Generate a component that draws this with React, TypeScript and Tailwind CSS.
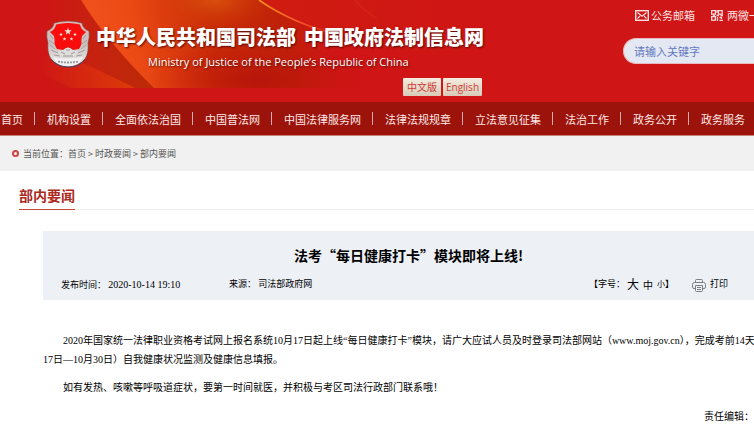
import React from 'react';

const navItems = [
  '首页',
  '机构设置',
  '全面依法治国',
  '中国普法网',
  '中国法律服务网',
  '法律法规规章',
  '立法意见征集',
  '法治工作',
  '政务公开',
  '政务服务',
];

const crumbs = ['首页', '时政要闻', '部内要闻'];

const sans = "font-['Noto_Sans_CJK_SC',sans-serif]";
const song = "font-['Liberation_Serif','Noto_Sans_CJK_SC',serif]";

const star = (cx: number, cy: number, r: number) =>
  Array.from({ length: 10 }, (_, i) => {
    const a = (Math.PI / 5) * i - Math.PI / 2;
    const d = i % 2 ? r * 0.4 : r;
    return `${(cx + d * Math.cos(a)).toFixed(2)},${(cy + d * Math.sin(a)).toFixed(2)}`;
  }).join(' ');

const Emblem: React.FC = () => (
  <svg viewBox="0 0 44 48" className="w-11 h-12 shrink-0" aria-label="司法部徽章">
    <defs>
      <linearGradient id="silver" x1="0" y1="0" x2="0" y2="1">
        <stop offset="0" stopColor="#d9b9b4" />
        <stop offset="0.5" stopColor="#c9c2c2" />
        <stop offset="1" stopColor="#ececec" />
      </linearGradient>
    </defs>
    <path
      d="M8 3Q22 -1 36 3Q37 9 43 11Q44 17 42 23Q43 33 39 39Q33 46 22 47Q11 46 5 39Q1 33 2 23Q0 17 1 11Q7 9 8 3Z"
      fill="url(#silver)"
      stroke="#7a3b3b"
      strokeWidth="0.6"
    />
    <path
      d="M10 4.500Q22 1.500 34 4.500Q35 10 40 12L36 16Q35 20 35.500 24Q34 28 33 29L27 30Q22 25 17 30L11 29Q10 28 8.500 24Q9 20 8 16L4 12Q9 10 10 4.500Z"
      fill="#f80c0c"
    />
    <g fill="#fde3d8">
      <polygon points={star(22, 11.5, 4)} />
      <polygon points={star(15, 14.5, 2)} />
      <polygon points={star(29, 14.5, 2)} />
      <polygon points={star(18.5, 19, 2)} />
      <polygon points={star(25.5, 19, 2)} />
    </g>
    <path
      d="M4 15L7 19M3 20L8 24M4 25L9 29M5 30L12 33M8 35L14 36M40 15L37 19M41 20L36 24M40 25L35 29M39 30L32 33M36 35L30 36"
      stroke="#a3938f"
      strokeWidth="0.9"
      fill="none"
    />
    <path d="M12 31L18 30Q22 25 26 30L32 31L30 36H14Z" fill="#dedede" />
    <path d="M15 32L19 34M29 32L25 34M20 30H24M17 36H27" stroke="#99908f" strokeWidth="0.9" />
    <path d="M7 37Q14 39 22 38.500T37 37Q34 45.500 22 46T7 37Z" fill="#f1f1f1" />
    <path d="M12 41.500Q22 43.500 32 41.500" stroke="#9a9aa0" strokeWidth="1.8" strokeDasharray="2 1" fill="none" />
    <path d="M5 39Q10 46.500 22 47T39 39" stroke="#3a4472" strokeWidth="0.9" fill="none" />
  </svg>
);

const BannerArt: React.FC = () => (
  <svg
    viewBox="0 0 440 88"
    preserveAspectRatio="none"
    className="absolute left-[43px] top-0 w-[440px] h-[88px]"
    aria-hidden="true"
  >
    <defs>
      <linearGradient id="leftFade" x1="0" y1="0" x2="1" y2="0">
        <stop offset="0" stopColor="#cf1515" />
        <stop offset="0.5" stopColor="#c5230f" />
        <stop offset="1" stopColor="#bb2b06" />
      </linearGradient>
      <linearGradient id="flame" gradientUnits="userSpaceOnUse" x1="60" y1="60" x2="280" y2="20">
        <stop offset="0" stopColor="#f0501c" />
        <stop offset="0.15" stopColor="#ec4a15" />
        <stop offset="0.5" stopColor="#c82c06" />
        <stop offset="0.8" stopColor="#bf2208" />
        <stop offset="1" stopColor="#cf1515" />
      </linearGradient>
      <linearGradient id="low" x1="0" y1="0" x2="1" y2="0">
        <stop offset="0" stopColor="#cf1814" />
        <stop offset="1" stopColor="#dd3b0a" />
      </linearGradient>
      <linearGradient id="sweep" x1="0" y1="0" x2="1" y2="0">
        <stop offset="0" stopColor="#cf1c10" />
        <stop offset="1" stopColor="#cf1515" />
      </linearGradient>
      <linearGradient id="streak" gradientUnits="userSpaceOnUse" x1="215" y1="0" x2="300" y2="36">
        <stop offset="0" stopColor="#ff9a1c" />
        <stop offset="0.5" stopColor="#f4562a" />
        <stop offset="1" stopColor="#cf1c12" />
      </linearGradient>
      <radialGradient id="shade" cx="0.5" cy="0.5" r="0.5">
        <stop offset="0" stopColor="#b4140a" stopOpacity="0.9" />
        <stop offset="1" stopColor="#c4150f" stopOpacity="0" />
      </radialGradient>
      <radialGradient id="glow" cx="0.5" cy="0.5" r="0.5">
        <stop offset="0" stopColor="#e06010" stopOpacity="0.7" />
        <stop offset="1" stopColor="#d8400a" stopOpacity="0" />
      </radialGradient>
    </defs>
    <path d="M0 0H40L112 88H0Z" fill="url(#leftFade)" />
    <path d="M0 56Q22 56 40 63Q68 76 92 88H28L0 74Z" fill="url(#low)" />
    <path d="M38 0H330L440 50V88H111Q64 42 38 0Z" fill="url(#flame)" />
    <ellipse cx="172" cy="0" rx="60" ry="30" fill="url(#glow)" />
    <ellipse cx="215" cy="80" rx="110" ry="42" fill="url(#shade)" />
    <path d="M216 0Q250 24 290 36T440 62V0Z" fill="url(#sweep)" />
    <path d="M216 0Q250 24 300 36" fill="none" stroke="url(#streak)" strokeWidth="1.6" />
    <path d="M312 0Q320 10 334 19" stroke="#d42218" strokeWidth="2" fill="none" />
  </svg>
);

const MailIcon: React.FC = () => (
  <svg viewBox="0 0 14 11" className="w-3.5 h-[11px]" fill="none" stroke="#fbe3e3" strokeWidth="1.4">
    <rect x="0.700" y="0.700" width="12.600" height="9.600" />
    <path d="M2.500 2.500L7 6.200L11.500 2.500M2.500 8.500L5 6M11.500 8.500L9 6" strokeWidth="1.1" />
  </svg>
);

const QrIcon: React.FC = () => (
  <svg viewBox="0 0 12 11" className="w-3 h-[11px]" fill="none" stroke="#fbdada" strokeWidth="1.3">
    <rect x="0.600" y="0.600" width="3.800" height="3.600" />
    <rect x="7.400" y="0.600" width="3.800" height="3.600" />
    <rect x="0.600" y="6.600" width="3.800" height="3.600" />
    <path d="M6 0V3M5.500 5.500H8M9.500 5.500H12M2 5.500H4M6.500 7V11M8.500 7.500H10.500V9M8.500 10.400H12" />
  </svg>
);

const PrinterIcon: React.FC = () => (
  <svg viewBox="0 0 14 13" className="w-3.5 h-[13px]" fill="none" stroke="#7b7f84" strokeWidth="1">
    <path d="M3.500 3.500V1.500Q3.500 0.500 4.500 0.500H9.500Q10.500 0.500 10.500 1.500V3.500" />
    <path d="M3.500 9.500H2Q0.500 9.500 0.500 8V5.500Q0.500 3.500 2.500 3.500H11.500Q13.500 3.500 13.500 5.500V8Q13.500 9.500 12 9.500H10.500" />
    <path d="M3.500 6.500H10.500V11.500Q10.500 12.500 9.500 12.500H4.500Q3.500 12.500 3.500 11.500ZM5 8.500H9M5 10.500H9" />
  </svg>
);

const Header: React.FC = () => (
  <header className="relative bg-[#cf1515] h-[102px]">
    <BannerArt />
    <div className="relative flex justify-between">
      <div className="w-[482px] shrink-0 pl-[46px] pt-5">
        <div className="flex gap-[6px]">
          <Emblem />
          <div className="text-white whitespace-nowrap [text-shadow:1px_1px_2px_#5a0a05]">
            <h1 className="flex gap-2 text-[20px] leading-[34px] font-black">
              <span>中华人民共和国司法部</span>
              <span>中国政府法制信息网</span>
            </h1>
            <p className="pl-[52px] text-[11px] leading-4 font-['Open_Sans',sans-serif]">
              Ministry of Justice of the People’s Republic of China
            </p>
          </div>
        </div>
        <div className="flex justify-end gap-0.5 mt-2 text-[10px] leading-[16px] text-[#cf3a35]">
          <button className="w-[38px] h-[18px] rounded-[1px] bg-linear-to-b from-[#f3ece0] to-[#d8ccb8]">中文版</button>
          <button className="w-[39px] h-[18px] rounded-[1px] bg-linear-to-b from-[#f3ece0] to-[#d8ccb8] font-['Open_Sans',sans-serif]">
            English
          </button>
        </div>
      </div>
      <div className="w-[131px] shrink-0 pt-[7px]">
        <div className="flex gap-4 pl-3 text-[11px] leading-4 text-[#fbe3e3] whitespace-nowrap overflow-hidden">
          <a href="#mail" className="flex items-center gap-0.5">
            <MailIcon />
            公务邮箱
          </a>
          <a href="#media" className="flex items-center gap-1">
            <QrIcon />
            两微一
          </a>
        </div>
        <input
          type="text"
          aria-label="请输入关键字"
          placeholder="请输入关键字"
          className="mt-[15px] block w-full h-[26px] pl-[10px] rounded-l-full bg-[#e3e8f3] border border-r-0 border-[#e9b9c0] text-[11px] placeholder:text-[#6478c0] outline-none"
        />
      </div>
    </div>
  </header>
);

const App: React.FC = () => {
  return (
    <div lang="zh-CN" className={`${sans} bg-white overflow-hidden min-h-screen`}>
      <Header />

      {/* Main menu */}
      <nav className="bg-[#9b130b] border-b border-[#c8827d] h-[34px] flex items-center pl-px text-[11px] leading-4 text-[#fbe9e7] whitespace-nowrap overflow-hidden">
        {navItems.map((item, i) => (
          <React.Fragment key={item}>
            {i > 0 && <span className="w-px h-[13px] ml-[11px] mr-3 shrink-0 bg-[#d3a9b4]"></span>}
            <a href={`#menu-${i}`}>{item}</a>
          </React.Fragment>
        ))}
      </nav>

      {/* Breadcrumb */}
      <div className="bg-[#f1f1f1] h-[35px] flex items-center pl-3 text-[9px] text-[#555]">
        <span className="w-[7px] h-[7px] rounded-full border-2 border-[#cf4448] mr-1"></span>
        <span>当前位置：</span>
        {crumbs.map((crumb, i) => (
          <React.Fragment key={crumb}>
            {i > 0 && <span className="mx-0.5">&gt;</span>}
            <a href={`#crumb-${i}`}>{crumb}</a>
          </React.Fragment>
        ))}
      </div>

      <main>
        <div className="ml-[19px] mt-3 border-b border-[#f0f0f0] flex">
          <h2 className="-mb-px pb-0.5 border-b border-[#c4473f] text-[14px] leading-6 font-bold text-[#ab2a22]">
            部内要闻
          </h2>
        </div>

        <article className="ml-[43px] mt-[21px] text-black">
          <div className="bg-[#edf1f6] h-[69px] pt-[13px]">
            <h3 className="pl-[251px] text-[14px] leading-[22px] font-bold whitespace-nowrap">法考“每日健康打卡”模块即将上线!</h3>
            <div className={`${song} flex items-center h-[18px] mt-[10px] pl-[18px] text-[9px] whitespace-nowrap`}>
              <span className="w-[168px]">
                发布时间： <time className="text-[10px]">2020-10-14 19:10</time>
              </span>
              <span>来源： 司法部政府网</span>
              <div className="flex items-center ml-auto mr-[26px]">
                <span>【字号：</span>
                <button className="text-[12px] ml-0.5">大</button>
                <button className="text-[10px] ml-1">中</button>
                <button className="text-[8px] ml-1">小</button>
                <span>】</span>
                <button className="flex items-center gap-1 ml-[18px]">
                  <PrinterIcon />
                  打印
                </button>
              </div>
            </div>
          </div>

          <div className={`${song} mt-[31px] text-[10px] leading-[19px] whitespace-nowrap`}>
            <p className="indent-5">
              2020年国家统一法律职业资格考试网上报名系统10月17日起上线“每日健康打卡”模块，请广大应试人员及时登录司法部网站（www.moj.gov.cn），完成考前14天
              <br />
              17日—10月30日）自我健康状况监测及健康信息填报。
            </p>
            <p className="indent-5 mt-[9px]">如有发热、咳嗽等呼吸道症状，要第一时间就医，并积极与考区司法行政部门联系哦！</p>
            <p className="mt-[10px] text-right">责任编辑：</p>
          </div>
        </article>
      </main>
    </div>
  );
};

export default App;
